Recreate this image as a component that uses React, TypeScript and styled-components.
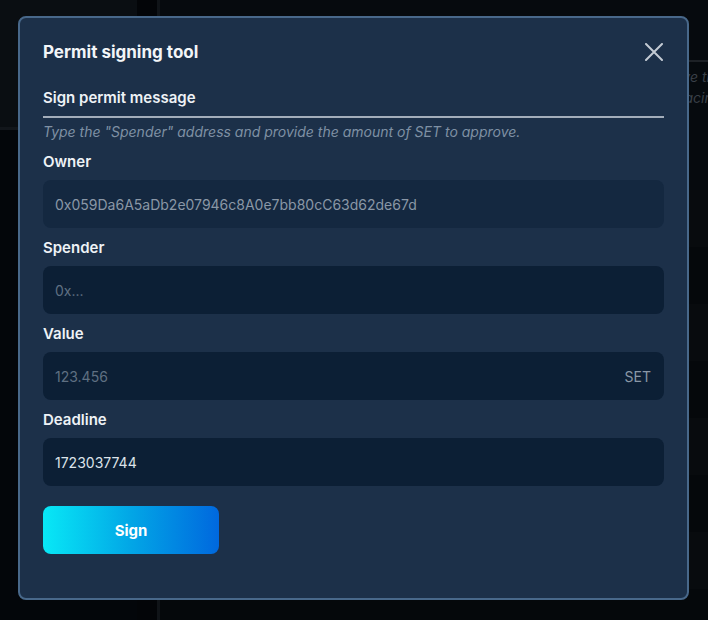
import styled, { createGlobalStyle } from "styled-components";

const GlobalStyle = createGlobalStyle`
  html, body {
    margin: 0;
    padding: 0;
    background: #05080c;
    font-family: Inter, "Noto Sans", sans-serif;
  }
  * { box-sizing: border-box; }
`;

const fields = [
  { label: "Owner", value: "0x059Da6A5aDb2e07946c8A0e7bb80cC63d62de67d", placeholder: "", disabled: true },
  { label: "Spender", value: "", placeholder: "0x...", disabled: false },
  { label: "Value", value: "", placeholder: "123.456", disabled: false, suffix: "SET" },
  { label: "Deadline", value: "1723037744", placeholder: "", disabled: false },
];

const CloseIcon = () => (
  <svg width="18" height="18" viewBox="0 0 18 18" fill="none">
    <path d="M1 1 L17 17 M17 1 L1 17" stroke="#c3cbd4" strokeWidth="2" strokeLinecap="round" />
  </svg>
);

export default function App() {
  return (
    <>
      <GlobalStyle />
      <Page>
        <Sidebar>
          <SideTop />
        </Sidebar>
        <Gutter />
        <Divider />
        <Main>
          <MainHeader>
            <FaintText>
              Approve the owner
              <br />
              for placing orders
            </FaintText>
          </MainHeader>
          {Array.from({ length: 8 }).map((_, i) => (
            <MainRow key={i} $odd={i % 2 === 1}>
              {i === 7 && <RowText>123</RowText>}
            </MainRow>
          ))}
        </Main>
      </Page>

      <Overlay>
        <Modal>
          <TitleRow>
            <Title>Permit signing tool</Title>
            <CloseButton aria-label="Close">
              <CloseIcon />
            </CloseButton>
          </TitleRow>

          <Tab>Sign permit message</Tab>
          <Helper>Type the "Spender" address and provide the amount of SET to approve.</Helper>

          <Form>
            {fields.map((f) => (
              <Field key={f.label}>
                <Label>{f.label}</Label>
                <InputBox $disabled={f.disabled}>
                  <Input
                    $disabled={f.disabled}
                    defaultValue={f.value}
                    placeholder={f.placeholder}
                    readOnly={f.disabled}
                  />
                  {f.suffix && <Suffix>{f.suffix}</Suffix>}
                </InputBox>
              </Field>
            ))}
          </Form>

          <SignButton>Sign</SignButton>
        </Modal>
      </Overlay>
    </>
  );
}

const Page = styled.div`
  height: 620px;
  display: grid;
  grid-template-columns: 137px 20px 3px 1fr;
  overflow: hidden;
`;

const Sidebar = styled.div`
  background: #03060a;
`;

const SideTop = styled.div`
  height: 130px;
  background: #0a0e12;
  border-bottom: 3px solid #12161b;
`;

const Gutter = styled.div`
  background: #030508;
`;

const Divider = styled.div`
  background: #101418;
`;

const Main = styled.div`
  background: #060a0e;
  display: flex;
  flex-direction: column;
`;

const MainHeader = styled.div`
  height: 130px;
  margin-top: 60px;
  border-top: 2px solid #1d2126;
  display: flex;
  justify-content: flex-end;
  padding: 4px 0 0;
`;

const FaintText = styled.div`
  font-style: italic;
  font-size: 14px;
  line-height: 21px;
  color: #3a4048;
  text-align: right;
  margin-right: -60px;
`;

const MainRow = styled.div<{ $odd: boolean }>`
  height: 57px;
  background: ${({ $odd }) => ($odd ? "#05080b" : "#080b0e")};
  display: flex;
  align-items: flex-end;
`;

const RowText = styled.span`
  font-size: 14px;
  color: #3c424a;
  margin-left: 33px;
  margin-bottom: -8px;
`;

const Overlay = styled.div`
  position: fixed;
  inset: 0;
  display: flex;
  align-items: flex-start;
  padding: 16px 0 0 18px;
`;

const Modal = styled.div`
  width: 671px;
  height: 584px;
  background: #1c3049;
  border: 2px solid #48688a;
  border-radius: 8px;
  padding: 20px 23px 0;
  display: flex;
  flex-direction: column;
`;

const TitleRow = styled.div`
  height: 28px;
  display: flex;
  align-items: center;
  justify-content: space-between;
`;

const Title = styled.h2`
  margin: 0;
  font-size: 17px;
  font-weight: 700;
  color: #f2f5f8;
`;

const CloseButton = styled.button`
  background: none;
  border: none;
  padding: 0;
  margin-right: 1px;
  display: flex;
  cursor: pointer;
`;

const Tab = styled.div`
  margin-top: 22px;
  font-size: 15px;
  font-weight: 600;
  line-height: 20px;
  color: #eef2f6;
  padding-bottom: 8px;
  border-bottom: 2px solid #a3adba;
`;

const Helper = styled.p`
  margin: 5px 0 0;
  font-size: 14px;
  line-height: 18px;
  font-style: italic;
  color: #7f90a4;
`;

const Form = styled.div`
  margin-top: 11px;
  display: flex;
  flex-direction: column;
  gap: 10px;
`;

const Field = styled.div`
  display: flex;
  flex-direction: column;
  gap: 8px;
`;

const Label = styled.label`
  font-size: 15px;
  font-weight: 600;
  line-height: 20px;
  color: #eef2f6;
`;

const InputBox = styled.div<{ $disabled: boolean }>`
  height: 48px;
  border-radius: 8px;
  background: ${({ $disabled }) => ($disabled ? "#142840" : "#0c1f35")};
  display: flex;
  align-items: center;
  padding: 0 13px 0 12px;
`;

const Input = styled.input<{ $disabled: boolean }>`
  flex: 1;
  min-width: 0;
  background: transparent;
  border: none;
  outline: none;
  padding: 0;
  font-family: Inter, "Noto Sans", sans-serif;
  font-size: 14px;
  color: ${({ $disabled }) => ($disabled ? "#8a97a6" : "#dde3ea")};

  &::placeholder {
    color: #5f6f82;
  }
`;

const Suffix = styled.span`
  font-size: 14px;
  color: #8a97a6;
`;

const SignButton = styled.button`
  margin-top: 20px;
  width: 176px;
  height: 48px;
  border: none;
  border-radius: 8px;
  background: linear-gradient(90deg, #08e8f6 0%, #02a6e6 50%, #0068de 100%);
  color: #ffffff;
  font-family: Inter, "Noto Sans", sans-serif;
  font-size: 15px;
  font-weight: 700;
  cursor: pointer;
`;
